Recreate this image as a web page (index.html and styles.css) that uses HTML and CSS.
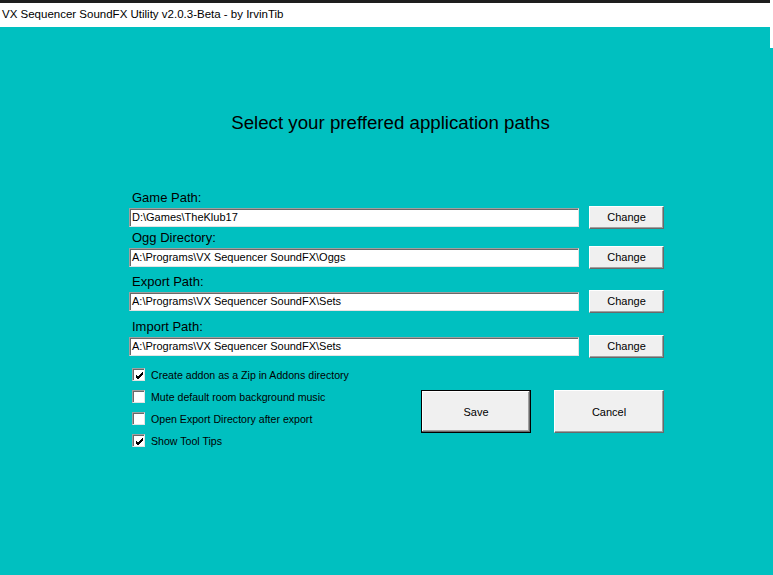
FILE: index.html
```html
<!DOCTYPE html>
<html>
<head>
<meta charset="utf-8">
<title>VX Sequencer SoundFX Utility</title>
<link rel="stylesheet" href="styles.css">
</head>
<body>
<div class="window">
  <div class="topstrip"></div>
  <div class="titlebar">VX Sequencer SoundFX Utility v2.0.3-Beta - by IrvinTib</div>
  <div class="client">
    <h1 class="heading">Select your preffered application paths</h1>
    <div class="form">
      <div class="group">
        <div class="label">Game Path:</div>
        <div class="row">
          <div class="textbox">D:\Games\TheKlub17</div>
          <div class="btn change">Change</div>
        </div>
      </div>
      <div class="group g2">
        <div class="label">Ogg Directory:</div>
        <div class="row">
          <div class="textbox">A:\Programs\VX Sequencer SoundFX\Oggs</div>
          <div class="btn change">Change</div>
        </div>
      </div>
      <div class="group g3">
        <div class="label">Export Path:</div>
        <div class="row">
          <div class="textbox">A:\Programs\VX Sequencer SoundFX\Sets</div>
          <div class="btn change">Change</div>
        </div>
      </div>
      <div class="group g4">
        <div class="label">Import Path:</div>
        <div class="row">
          <div class="textbox">A:\Programs\VX Sequencer SoundFX\Sets</div>
          <div class="btn change">Change</div>
        </div>
      </div>
      <div class="bottom">
        <div class="checks">
          <div class="check"><span class="box"><svg width="9" height="9" viewBox="0 0 9 9"><path d="M1 4 L3 6 L8 1 M1 5 L3 7 L8 2 M1 6 L3 8 L8 3" stroke="#000" stroke-width="1" fill="none"/></svg></span>Create addon as a Zip in Addons directory</div>
          <div class="check"><span class="box"></span>Mute default room background music</div>
          <div class="check"><span class="box"></span>Open Export Directory after export</div>
          <div class="check"><span class="box"><svg width="9" height="9" viewBox="0 0 9 9"><path d="M1 4 L3 6 L8 1 M1 5 L3 7 L8 2 M1 6 L3 8 L8 3" stroke="#000" stroke-width="1" fill="none"/></svg></span>Show Tool Tips</div>
        </div>
        <div class="actions">
          <div class="btn big default">Save</div>
          <div class="btn big">Cancel</div>
        </div>
      </div>
    </div>
  </div>
</div>
</body>
</html>
```

FILE: styles.css
```css
html, body {
  margin: 0;
  padding: 0;
  background: #00c0c0;
}
.window {
  width: 773px;
  height: 575px;
  position: relative;
  overflow: hidden;
  background: #00c0c0;
  font-family: "Liberation Sans", Arial, sans-serif;
}
.window::after {
  content: "";
  position: absolute;
  right: 0;
  top: 0;
  width: 3px;
  height: 48px;
  background: #ffffff;
}
.topstrip {
  height: 3px;
  background: #1e1e1e;
}
.titlebar {
  height: 24px;
  line-height: 23px;
  background: #ffffff;
  color: #000;
  font-family: "Liberation Sans", Arial, sans-serif;
  font-size: 11.5px;
  padding-left: 2px;
  white-space: nowrap;
}
.client {
  display: flex;
  flex-direction: column;
  align-items: flex-start;
}
.heading {
  align-self: center;
  margin: 85px 0 0 0;
  height: 22px;
  line-height: 22px;
  font-size: 18.7px;
  font-weight: normal;
  color: #000;
  padding-left: 8px;
}
.form {
  width: 535px;
  margin-top: 56px;
  margin-left: 129px;
  display: flex;
  flex-direction: column;
}
.group {
  display: flex;
  flex-direction: column;
}
.g2 { margin-top: 1px; }
.g3 { margin-top: 5px; }
.g4 { margin-top: 6px; }
.label {
  height: 16px;
  line-height: 16px;
  font-size: 13px;
  color: #000;
  padding-left: 3px;
}
.row {
  display: flex;
  align-items: center;
  height: 23px;
  gap: 10px;
}
.textbox {
  box-sizing: border-box;
  width: 450px;
  height: 19px;
  background: #fff;
  border-top: 1px solid #a0a0a0;
  border-left: 1px solid #a0a0a0;
  border-right: 1px solid #e3e3e3;
  border-bottom: 1px solid #e3e3e3;
  box-shadow: inset 1px 1px 0 #696969;
  font-size: 11px;
  line-height: 16px;
  padding-left: 2px;
  color: #000;
  white-space: nowrap;
}
.btn {
  box-sizing: border-box;
  background: #f0f0f0;
  border-top: 1px solid #ffffff;
  border-left: 1px solid #ffffff;
  border-right: 1px solid #696969;
  border-bottom: 1px solid #696969;
  box-shadow: inset -1px -1px 0 #a0a0a0;
  font-size: 11px;
  color: #000;
  display: flex;
  align-items: center;
  justify-content: center;
}
.change {
  width: 75px;
  height: 23px;
  padding-bottom: 1px;
}
.bottom {
  display: flex;
  justify-content: space-between;
  margin-top: 10px;
}
.checks {
  display: flex;
  flex-direction: column;
  gap: 9px;
  padding-left: 3px;
}
.check {
  display: flex;
  align-items: center;
  height: 13px;
  font-size: 10.6px;
  color: #000;
  white-space: nowrap;
}
.box {
  box-sizing: border-box;
  width: 13px;
  height: 13px;
  margin-right: 6px;
  background: #fff;
  border-top: 1px solid #a0a0a0;
  border-left: 1px solid #a0a0a0;
  border-right: 1px solid #e3e3e3;
  border-bottom: 1px solid #e3e3e3;
  box-shadow: inset 1px 1px 0 #696969;
  display: flex;
  align-items: center;
  justify-content: center;
  padding: 1px 0 0 1px;
}
.actions {
  display: flex;
  gap: 23px;
  margin-top: 22px;
}
.big {
  width: 110px;
  height: 43px;
}
.default {
  border: 1px solid #000;
  box-shadow: inset -1px -1px 0 #696969, inset 1px 1px 0 #ffffff, inset -2px -2px 0 #a0a0a0;
}
```
